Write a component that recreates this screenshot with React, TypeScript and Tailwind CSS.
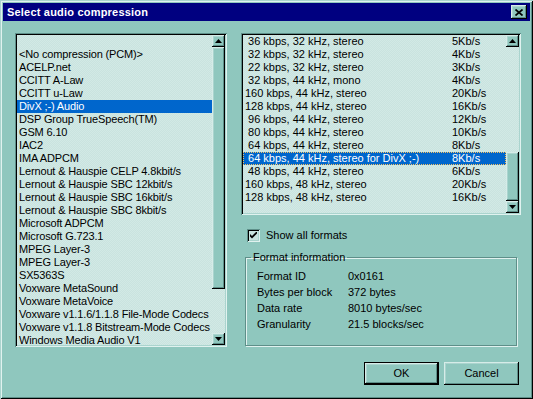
import React from 'react'

const codecs = [
  '',
  '<No compression (PCM)>',
  'ACELP.net',
  'CCITT A-Law',
  'CCITT u-Law',
  'DivX ;-) Audio',
  'DSP Group TrueSpeech(TM)',
  'GSM 6.10',
  'IAC2',
  'IMA ADPCM',
  'Lernout & Hauspie CELP 4.8kbit/s',
  'Lernout & Hauspie SBC 12kbit/s',
  'Lernout & Hauspie SBC 16kbit/s',
  'Lernout & Hauspie SBC 8kbit/s',
  'Microsoft ADPCM',
  'Microsoft G.723.1',
  'MPEG Layer-3',
  'MPEG Layer-3',
  'SX5363S',
  'Voxware MetaSound',
  'Voxware MetaVoice',
  'Voxware v1.1.6/1.1.8 File-Mode Codecs',
  'Voxware v1.1.8 Bitstream-Mode Codecs',
  'Windows Media Audio V1',
]

const formats: [string, string][] = [
  ['\u00a036 kbps, 32 kHz, stereo', '5Kb/s'],
  ['\u00a032 kbps, 32 kHz, stereo', '4Kb/s'],
  ['\u00a022 kbps, 32 kHz, stereo', '3Kb/s'],
  ['\u00a032 kbps, 44 kHz, mono', '4Kb/s'],
  ['160 kbps, 44 kHz, stereo', '20Kb/s'],
  ['128 kbps, 44 kHz, stereo', '16Kb/s'],
  ['\u00a096 kbps, 44 kHz, stereo', '12Kb/s'],
  ['\u00a080 kbps, 44 kHz, stereo', '10Kb/s'],
  ['\u00a064 kbps, 44 kHz, stereo', '8Kb/s'],
  ['\u00a064 kbps, 44 kHz, stereo for DivX ;-)', '8Kb/s'],
  ['\u00a048 kbps, 44 kHz, stereo', '6Kb/s'],
  ['160 kbps, 48 kHz, stereo', '20Kb/s'],
  ['128 kbps, 48 kHz, stereo', '16Kb/s'],
]

const info: [string, string][] = [
  ['Format ID', '0x0161'],
  ['Bytes per block', '372 bytes'],
  ['Data rate', '8010 bytes/sec'],
  ['Granularity', '21.5 blocks/sec'],
]

const raised =
  'shadow-[inset_-1px_-1px_0_#000,inset_1px_1px_0_#d6ece8,inset_-2px_-2px_0_#5e8f89,inset_2px_2px_0_#aad4ce]'
const sunken =
  'shadow-[inset_1px_1px_0_#5e8f89,inset_-1px_-1px_0_#e0f2ef,inset_2px_2px_0_#000,inset_-2px_-2px_0_#aad4ce]'
const dither =
  'bg-[image:repeating-conic-gradient(#c9e3df_0_25%,#d2e9e5_0_50%)] bg-[length:2px_2px]'

function Arrow({ down = false }: { down?: boolean }) {
  return (
    <svg width="7" height="4" viewBox="0 0 7 4">
      {down ? <path d="M0 0H7L3.5 4Z" fill="#000" /> : <path d="M0 4H7L3.5 0Z" fill="#000" />}
    </svg>
  )
}

function ArrowBtn({ down = false }: { down?: boolean }) {
  return (
    <div className={`h-[12px] w-[13px] shrink-0 flex items-center justify-center bg-[#8fc7be] ${raised}`}>
      <Arrow down={down} />
    </div>
  )
}

export default function App() {
  return (
    <div
      className={`w-[533px] h-[399px] bg-[#8fc7be] p-[3px] flex flex-col text-[11px] text-black font-['Liberation_Sans',Arial,sans-serif] shadow-[inset_1px_1px_0_#aad4ce,inset_-1px_-1px_0_#000,inset_2px_2px_0_#e0f2ef,inset_-2px_-2px_0_#5e8f89]`}
    >
      {/* title bar */}
      <div className="h-[18px] bg-[#000080] flex items-center justify-between pl-[4px] pr-[3px]">
        <span className="text-white font-bold text-[11px] tracking-[0.2px]">Select audio compression</span>
        <div className={`w-[16px] h-[14px] bg-[#8fc7be] flex items-center justify-center ${raised}`}>
          <svg width="8" height="7" viewBox="0 0 8 7">
            <path d="M0.5 0.5L7.5 6.5M7.5 0.5L0.5 6.5" stroke="#000" strokeWidth="1.7" />
          </svg>
        </div>
      </div>

      <div className="flex mt-[12px] pl-[12px]">
        {/* codec list */}
        <div className={`w-[212px] h-[314px] p-[2px] flex ${sunken} ${dither}`}>
          <div className="flex-1 overflow-hidden tracking-[-0.15px]">
            {codecs.map((c, i) => (
              <div
                key={i}
                className={`h-[13px] leading-[13px] pl-[2px] whitespace-nowrap ${i === 5 ? 'bg-[#0066cc] text-white' : ''}`}
              >
                {c}
              </div>
            ))}
          </div>
          <div className="w-[13px] flex flex-col">
            <ArrowBtn />
            <div className={`h-[242px] bg-[#8fc7be] ${raised}`} />
            <div className="flex-1" />
            <ArrowBtn down />
          </div>
        </div>

        {/* right column */}
        <div className="ml-[14px] w-[280px] flex flex-col">
          <div className={`h-[182px] p-[2px] flex ${sunken} ${dither}`}>
            <div className="flex-1 overflow-hidden">
              {formats.map(([a, b], i) => (
                <div
                  key={i}
                  className={`h-[13px] leading-[13px] pl-[2px] flex whitespace-nowrap ${
                    i === 9 ? 'bg-[#0066cc] text-white outline-1 outline-dotted outline-[#f4c060] -outline-offset-1' : ''
                  }`}
                >
                  <span className="w-[207px]">{a}</span>
                  <span>{b}</span>
                </div>
              ))}
            </div>
            <div className="w-[13px] flex flex-col">
              <ArrowBtn />
              <div className="flex-1" />
              <div className={`h-[49px] bg-[#8fc7be] ${raised}`} />
              <ArrowBtn down />
            </div>
          </div>

          <div className="mt-[14px] h-[13px] flex items-center pl-[6px]">
            <div className={`w-[13px] h-[13px] flex items-center justify-center bg-[#c9e3df] ${sunken}`}>
              <svg width="7" height="7" viewBox="0 0 7 7">
                <path d="M0 2L2 4L7 -1V1.5L2 6.5L0 4.5Z" fill="#000" />
              </svg>
            </div>
            <span className="ml-[6px]">Show all formats</span>
          </div>

          <fieldset className="mt-[9px] ml-[4px] w-[272px] h-[95px] border border-[#5e8f89] shadow-[inset_1px_1px_0_#e0f2ef,1px_1px_0_#e0f2ef] pl-[11px] pt-[4px]">
            <legend className="-ml-[6px] px-[2px] leading-[13px]">Format information</legend>
            {info.map(([k, v]) => (
              <div key={k} className="flex h-[16px] leading-[16px]">
                <span className="w-[91px]">{k}</span>
                <span>{v}</span>
              </div>
            ))}
          </fieldset>
        </div>
      </div>

      <div className="flex justify-end gap-[5px] mt-[15px] pr-[11px]">
        <button className={`w-[75px] h-[23px] bg-[#8fc7be] border border-black ${raised}`}>OK</button>
        <button className={`w-[75px] h-[23px] bg-[#8fc7be] ${raised}`}>Cancel</button>
      </div>
    </div>
  )
}
